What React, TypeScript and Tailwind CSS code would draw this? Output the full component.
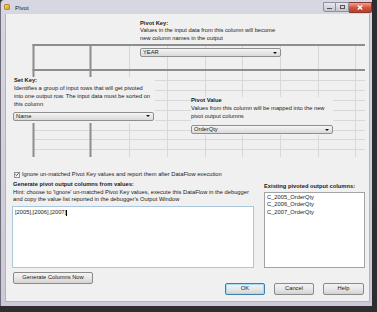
import React from "react";

function Arrow() {
  return (
    <div className="w-0 h-0 border-l-[2px] border-r-[2px] border-t-[2.5px] border-l-transparent border-r-transparent border-t-[#111]" />
  );
}

function Combo({ text, className }: { text: string; className: string }) {
  return (
    <div
      className={
        "h-[9px] rounded-[2px] border border-[#8e8f8f] bg-linear-to-b from-[#f5f5f5] to-[#dadada] flex items-center justify-between pl-[2px] pr-[3px] " +
        className
      }
    >
      <span className="leading-[7px]">{text}</span>
      <Arrow />
    </div>
  );
}

function Btn({ text, className }: { text: string; className: string }) {
  return (
    <div
      className={
        "h-[12px] rounded-[2px] border flex items-center justify-center bg-linear-to-b from-[#f3f3f3] via-[#e7e7e7] to-[#d3d3d3] " +
        className
      }
    >
      {text}
    </div>
  );
}

export default function App() {
  const lightV = [123, 161, 199, 236, 274, 312, 349];
  const lightH = [66, 76, 86, 96, 106, 116, 125, 135];
  return (
    <div
      className="w-[377px] h-[312px] bg-[#2e2e30] overflow-hidden text-[#1a1a1a] text-[5.75px] leading-[7.8px]"
      style={{ fontFamily: '"Liberation Sans", Arial, sans-serif' }}
    >
      <div className="w-[372px] h-[306px] flex flex-col bg-linear-to-b from-[#d6d7e0] to-[#cdc9d8] border-l border-[#6d6b78] rounded-tl-[4px]">
        {/* title bar */}
        <div className="h-[14px] flex items-start shrink-0">
          <div className="mt-[4px] ml-[3px] w-[6px] h-[6px] bg-linear-to-br from-[#f7d66b] to-[#d59a2a] border border-[#b78a3a] rounded-[1px]" />
          <span className="ml-[5px] mt-[3.5px] text-[6.2px] text-[#1e1e1e]">Pivot</span>
          <div className="ml-auto flex mt-[2px]">
            <div className="w-[13px] h-[10px] rounded-bl-[2px] border border-[#8f8f9c] bg-linear-to-b from-[#e6e8ee] to-[#c3c6d0] flex items-end justify-center pb-[2px]">
              <div className="w-[5px] h-[1.5px] bg-[#555]" />
            </div>
            <div className="w-[13px] h-[10px] border border-l-0 border-[#8f8f9c] bg-linear-to-b from-[#e6e8ee] to-[#c3c6d0] flex items-center justify-center">
              <div className="w-[5px] h-[4px] border border-[#555] border-t-[1.5px]" />
            </div>
            <div className="w-[23px] h-[11px] rounded-br-[2px] border border-l-0 border-[#8a3a32] bg-linear-to-b from-[#e9a595] via-[#d2553f] to-[#c23a26] flex items-center justify-center">
              <svg width="6" height="5" viewBox="0 0 6 5">
                <path d="M0.8 0.5 L5.2 4.5 M5.2 0.5 L0.8 4.5" stroke="#ffffff" strokeWidth="1.4" />
              </svg>
            </div>
          </div>
        </div>
        {/* client area */}
        <div className="ml-[4px] mr-[2px] h-[288px] bg-[#f0f0f0] border border-[#b5b3bf] border-t-0 flex flex-col">
          <div className="relative h-[151px] shrink-0">
            <svg className="absolute left-0 top-0" width="365" height="151">
              {lightV.map((x) => (
                <line key={"v" + x} x1={x + 0.5} y1={30} x2={x + 0.5} y2={143} stroke="#d8d8d8" strokeWidth={1} />
              ))}
              {lightH.map((y) => (
                <line key={"h" + y} x1={27} y1={y + 0.5} x2={359} y2={y + 0.5} stroke="#d8d8d8" strokeWidth={1} />
              ))}
              <line x1={26.5} y1={31} x2={359} y2={31} stroke="#8d8d8d" strokeWidth={2} />
              <line x1={26.5} y1={56} x2={359} y2={56} stroke="#8d8d8d" strokeWidth={2} />
              <line x1={27.5} y1={30} x2={27.5} y2={143} stroke="#8d8d8d" strokeWidth={2} />
              <line x1={84.5} y1={30} x2={84.5} y2={143} stroke="#8d8d8d" strokeWidth={2} />
            </svg>
            <div className="relative pt-[5.5px] pl-[134px]">
              <div className="w-[141px] bg-[#f0f0f0]">
                <div className="font-bold">Pivot Key:</div>
                <div>Values in the input data from this column will become</div>
                <div>new column names in the output</div>
              </div>
              <Combo text="YEAR" className="mt-[5.5px] w-[141px]" />
            </div>
            <div className="relative flex items-start mt-[20px]">
              <div className="ml-[7px] w-[142px] bg-[#f0f0f0] pb-[2px]">
                <div className="pl-[1px]">
                  <div className="font-bold">Set Key:</div>
                  <div>Identifies a group of input rows that will get pivoted</div>
                  <div>into one output row. The input data must be sorted on</div>
                  <div>this column</div>
                </div>
                <Combo text="Name" className="mt-[3px] w-[141px]" />
              </div>
              <div className="ml-[36px] mt-[20px] w-[142px] bg-[#f0f0f0] pb-[1px]">
                <div className="font-bold">Pivot Value</div>
                <div>Values from this column will be mapped into the new</div>
                <div>pivot output columns</div>
                <Combo text="OrderQty" className="mt-[4.5px] w-[142px]" />
              </div>
            </div>
          </div>
          {/* checkbox */}
          <div className="mt-[6px] flex items-center h-[7.8px] pl-[8px]">
            <div className="w-[6px] h-[6px] border border-[#8f8f8f] bg-linear-to-br from-[#e4e8ee] to-[#fbfbfb] flex items-center justify-center">
              <svg width="5" height="5" viewBox="0 0 5 5">
                <path d="M0.6 2.6 L2 3.9 L4.4 0.9" fill="none" stroke="#3b4f86" strokeWidth="1.1" />
              </svg>
            </div>
            <span className="ml-[2px]">Ignore un-matched Pivot Key values and report them after DataFlow execution</span>
          </div>
          {/* bottom */}
          <div className="flex mt-[2px]">
            <div className="ml-[6px] w-[242px] flex flex-col">
              <div className="pl-[1px]">
                <div className="font-bold">Generate pivot output columns from values:</div>
                <div>Hint: choose to &#39;Ignore&#39; un-matched Pivot Key values, execute this DataFlow in the debugger</div>
                <div>and copy the value list reported in the debugger&#39;s Output Window</div>
              </div>
              <div className="mt-[2px] h-[62px] bg-white border border-[#a9c6dc] pl-[2px] pt-[2px] flex items-start">
                <span>[2005],[2006],[2007]</span>
                <span className="w-[1px] h-[6px] mt-[1px] bg-black" />
              </div>
              <Btn text="Generate Columns Now" className="mt-[4px] w-[80px] ml-[1px] border-[#8a8a8a]" />
            </div>
            <div className="ml-[10px] w-[101px] flex flex-col">
              <div className="mt-[2px] font-bold">Existing pivoted output columns:</div>
              <div className="mt-[1px] h-[76px] bg-white border border-[#a3a3a3] pl-[2px] pt-[1px] leading-[7.5px]">
                <div>C_2005_OrderQty</div>
                <div>C_2006_OrderQty</div>
                <div>C_2007_OrderQty</div>
              </div>
            </div>
          </div>
          <div className="flex justify-end mt-[-1px] pr-[5px] gap-[9px]">
            <Btn text="OK" className="w-[40px] border-[#3c7fb1] shadow-[inset_0_0_0_1px_#a7dcf5]" />
            <Btn text="Cancel" className="w-[40px] border-[#8a8a8a]" />
            <Btn text="Help" className="w-[41px] border-[#8a8a8a]" />
          </div>
        </div>
      </div>
    </div>
  );
}
